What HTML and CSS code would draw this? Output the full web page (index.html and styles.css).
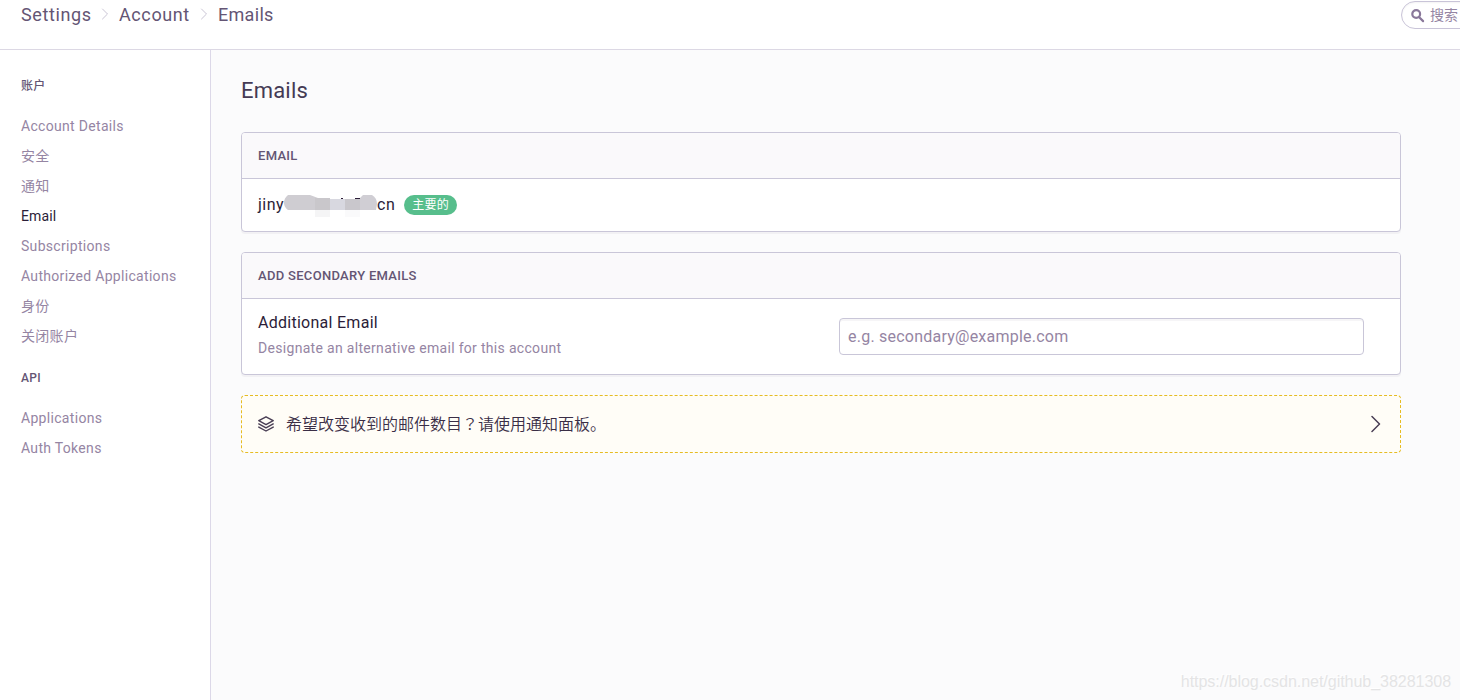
FILE: index.html
```html
<!DOCTYPE html>
<html lang="zh-CN">
<head>
  <meta charset="UTF-8" />
  <meta name="viewport" content="width=device-width, initial-scale=1" />
  <title>Emails</title>
  <link rel="stylesheet" href="styles.css">
</head>
<body>
  <!-- Header -->
  <header class="header">
    <nav class="breadcrumbs">
      <span class="crumb-settings">Settings</span>
      <svg class="crumb-arrow" width="8" height="12" viewBox="0 0 8 12"><path d="M1.5 1l5 5-5 5" /></svg>
      <span class="crumb-account">Account</span>
      <svg class="crumb-arrow" width="8" height="12" viewBox="0 0 8 12"><path d="M1.5 1l5 5-5 5" /></svg>
      <span class="crumb-emails">Emails</span>
    </nav>
    <div class="search">
      <svg width="14" height="14" viewBox="0 0 14 14"><circle cx="5.2" cy="5" r="3.9" /><path d="M8.2 8.200l3.900 3.900" /></svg>
      <span>搜索</span>
    </div>
  </header>

  <div class="layout">
    <!-- Sidebar -->
    <aside class="sidebar">
      <h6>账户</h6>
      <ul>
        <li>Account Details</li>
        <li>安全</li>
        <li>通知</li>
        <li class="active">Email</li>
        <li>Subscriptions</li>
        <li>Authorized Applications</li>
        <li>身份</li>
        <li>关闭账户</li>
      </ul>
      <h6>API</h6>
      <ul>
        <li>Applications</li>
        <li>Auth Tokens</li>
      </ul>
    </aside>

    <!-- Content -->
    <main class="content">
      <h1>Emails</h1>

      <section class="panel">
        <div class="panel-header">Email</div>
        <div class="email-row">
          <span class="address address-start">jiny</span>
          <svg class="mask" width="93" height="24" viewBox="0 0 93 24">
            <path fill="#cfcdd2" d="M4 2h22l8 3h12v12H4Q0 14 0 10Q0 5 4 2z" />
            <path fill="#c9c7cb" d="M31 5h15v12H31z" />
            <path fill="#d8d8e0" d="M46 6h15v11H46z" />
            <path fill="#c9c7cc" d="M61 6h15v11H61z" />
            <path fill="#d0ced4" d="M76 5l3-3h9q5 3 5 9l-1 6H76z" />
            <path fill="#f5f5f6" d="M31 17h15v8H31z" />
            <path fill="#fafafb" d="M61 17h15v8H61z" />
            <path fill="#2b1d38" d="M57 5h2v1h-2zM71 5h5v1h-5z" />
          </svg>
          <span class="address">cn</span>
          <span class="tag">主要的</span>
        </div>
      </section>

      <section class="panel">
        <div class="panel-header">Add Secondary Emails</div>
        <form class="field">
          <div class="field-text">
            <label for="email">Additional Email</label>
            <p>Designate an alternative email for this account</p>
          </div>
          <input type="text" id="email" placeholder="e.g. secondary@example.com" />
        </form>
      </section>

      <div class="alert">
        <svg class="stack-icon" width="16" height="16" viewBox="0 0 16 16">
          <path d="M8 .8l7.200 3.900L8 8.600.8 4.700z" />
          <path d="M.8 7.900L8 11.800l7.200-3.900M.8 11.100L8 15l7.200-3.900" />
        </svg>
        <span class="alert-text">希望改变收到的邮件数目<span class="mark" lang="zh-TW">？</span>请使用通知面板。</span>
        <svg class="alert-arrow" width="10" height="18" viewBox="0 0 10 18"><path d="M1 1.500L8.500 9 1 16.500" /></svg>
      </div>
    </main>
  </div>

  <div class="watermark">https://blog.csdn.net/github_38281308</div>
</body>
</html>
```
FILE: styles.css
```css
* {
  box-sizing: border-box;
}

body {
  margin: 0;
  height: 100vh;
  overflow: hidden;
  display: flex;
  flex-direction: column;
  font-family: Roboto, "Noto Sans CJK SC", sans-serif;
  font-size: 16px;
  color: #2b1d38;
  background: #fbfbfc;
}

svg {
  flex: none;
  fill: none;
  stroke-linecap: round;
  stroke-linejoin: round;
}

.header {
  display: flex;
  justify-content: space-between;
  height: 50px;
  flex: none;
  padding-left: 21px;
  background: #fff;
  border-bottom: 1px solid #dcd8e4;
  overflow: hidden;
}

.breadcrumbs {
  display: flex;
  align-items: center;
  height: 28px;
  font-size: 18px;
  color: #645574;
}

.crumb-settings {
  width: 70px;
  letter-spacing: 0.6px;
}

.crumb-account {
  width: 71px;
  letter-spacing: 0.6px;
}

.crumb-emails {
  letter-spacing: 0.3px;
}

.crumb-arrow {
  margin: 0 10px;
  stroke: #c9c4d4;
}

.search {
  display: flex;
  align-items: center;
  gap: 5px;
  width: 80px;
  height: 28px;
  margin: 1px -21px 0 0;
  padding: 0 0 1px 9px;
  border: 1px solid #c9c4d8;
  border-radius: 14px;
  box-shadow: inset 0 1px 2px rgba(0, 0, 0, 0.05);
  font-size: 14px;
  line-height: 20px;
  color: #9585a3;
}

.search svg {
  margin-top: 2px;
  stroke: #89779a;
  stroke-width: 2.2;
}

.layout {
  display: flex;
  flex: 1;
}

.sidebar {
  width: 211px;
  padding: 26px 0 0 21px;
  background: #fff;
  border-right: 1px solid #dcd8e8;
}

.sidebar h6 {
  margin: 0;
  font-size: 12px;
  line-height: 20px;
  font-weight: 500;
  letter-spacing: 0.3px;
  color: #645574;
}

.sidebar ul {
  list-style: none;
  margin: 15px 0 17px;
  padding: 0;
}

.sidebar li {
  height: 30px;
  line-height: 30px;
  font-size: 14px;
  letter-spacing: 0.31px;
  color: #9585a3;
}

.sidebar .active {
  letter-spacing: 0.1px;
  color: #2b1d38;
}

.content {
  flex: 1;
  padding: 26px 59px 0 30px;
}

h1 {
  margin: 0 0 27px;
  font-size: 22px;
  line-height: 29px;
  font-weight: 400;
  letter-spacing: 0.2px;
  color: #443a54;
}

.panel {
  margin-bottom: 20px;
  background: #fff;
  border: 1px solid #c9c6d8;
  border-radius: 4px;
  box-shadow: 0 2px 0 rgba(37, 11, 54, 0.04);
}

.panel-header {
  height: 46px;
  padding-left: 16px;
  line-height: 45px;
  font-size: 13px;
  font-weight: 500;
  letter-spacing: 0.3px;
  text-transform: uppercase;
  color: #645574;
  background: #faf9fb;
  border-bottom: 1px solid #c9c6d8;
  border-radius: 3px 3px 0 0;
}

.email-row {
  display: flex;
  align-items: center;
  height: 52px;
  padding-left: 16px;
}

.address {
  padding-bottom: 2px;
  letter-spacing: 0.5px;
}

.address-start {
  width: 26px;
}

.tag {
  height: 20px;
  margin-left: 9px;
  padding: 0 8px;
  border-radius: 10px;
  font-size: 12px;
  line-height: 20px;
  letter-spacing: 0.3px;
  color: #fff;
  background: #57be8c;
}

.field {
  display: flex;
  justify-content: space-between;
  align-items: center;
  height: 75px;
  padding: 0 36px 0 16px;
}

.field label {
  display: block;
  line-height: 24px;
  letter-spacing: 0.27px;
}

.field p {
  margin: 2px 0 4px;
  font-size: 14px;
  line-height: 22px;
  letter-spacing: 0.31px;
  color: #9585a3;
}

.field input {
  width: 525px;
  height: 37px;
  padding: 0 8px;
  border: 1px solid #c9c6d8;
  border-radius: 4px;
  box-shadow: inset 0 2px 0 rgba(37, 11, 54, 0.04);
  font-family: inherit;
  font-size: 16px;
  letter-spacing: 0.23px;
}

.field input::placeholder {
  color: #9585a3;
}

.alert {
  display: flex;
  align-items: center;
  height: 58px;
  padding: 0 19px 0 16px;
  border: 1px dashed #e6bc23;
  border-radius: 4px;
  background: #fffdf7;
  color: #493e54;
}

.stack-icon {
  margin-right: 12px;
  stroke: #493e54;
  stroke-width: 1.4;
}

.alert-text {
  padding-bottom: 3px;
  font-weight: 350;
  color: #3a2e46;
}

.mark {
  font-family: "Noto Sans CJK TC", sans-serif;
}

.alert-arrow {
  margin-left: auto;
  stroke: #493e54;
  stroke-width: 1.5;
}

.watermark {
  position: absolute;
  right: 9px;
  bottom: 9px;
  font-family: "Liberation Sans", Arial, sans-serif;
  font-size: 16px;
  line-height: 18px;
  letter-spacing: -0.03px;
  color: #e4e4e5;
  text-shadow: -1px -1px 0 #fff;
}
```
